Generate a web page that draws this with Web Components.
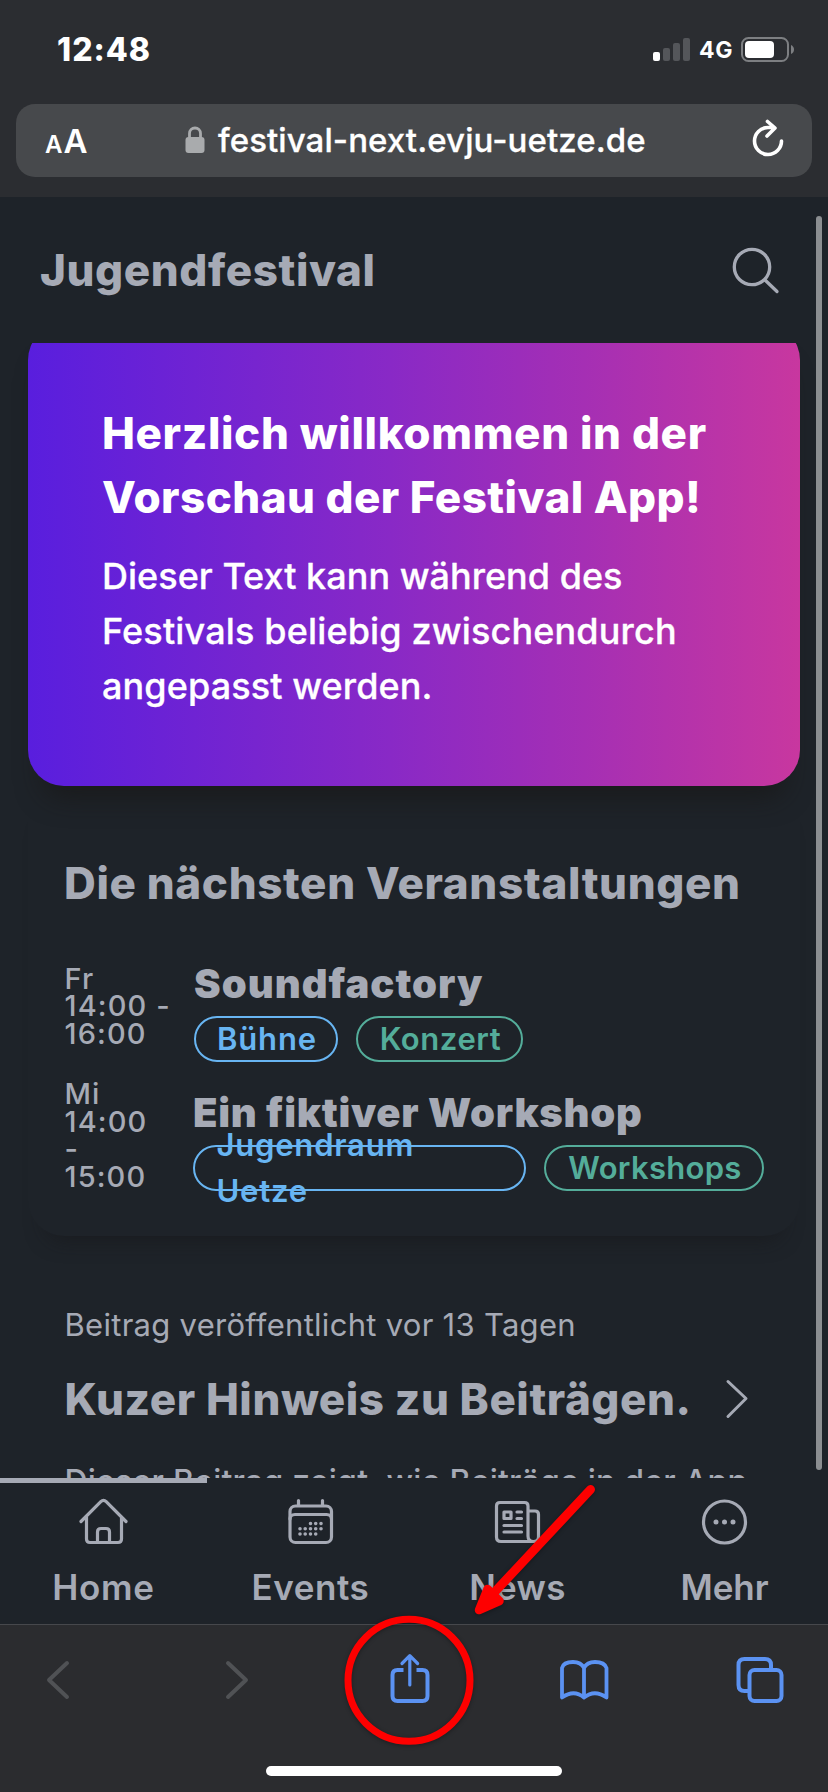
<!DOCTYPE html>
<html lang="de">
<head>
<meta charset="utf-8">
<title>Jugendfestival</title>
<style>
html,body{margin:0;padding:0;background:#1e2329}
body{font-family:Inter,"Liberation Sans",sans-serif;width:828px;height:1792px;overflow:hidden}
</style>
</head>
<body>
<phone-screen>
  <status-bar slot="chrome" time="12:48" network="4G"></status-bar>
  <address-bar slot="chrome">festival-next.evju-uetze.de</address-bar>
  <app-header slot="header">Jugendfestival</app-header>
  <welcome-card>
    <span slot="l1">Herzlich willkommen in der</span>
    <span slot="l2">Vorschau der Festival App!</span>
    <span slot="t1">Dieser Text kann während des</span>
    <span slot="t2">Festivals beliebig zwischendurch</span>
    <span slot="t3">angepasst werden.</span>
  </welcome-card>
  <event-list>
    <span slot="title">Die nächsten Veranstaltungen</span>
    <event-item style="--time-w:130px;--title-ls:1.01px">
      <span slot="time">Fr<br>14:00 -<br>16:00</span>
      <span slot="title">Soundfactory</span>
      <tag-pill style="width:144px;letter-spacing:.9px">Bühne</tag-pill>
      <tag-pill kind="topic" style="width:167px;letter-spacing:.6px">Konzert</tag-pill>
    </event-item>
    <event-item style="--time-w:129px;--title-ls:.7px">
      <span slot="time">Mi<br>14:00<br>-<br>15:00</span>
      <span slot="title">Ein fiktiver Workshop</span>
      <tag-pill multiline style="width:333px;letter-spacing:.8px">Jugendraum<br>Uetze</tag-pill>
      <tag-pill kind="topic" style="width:220px;letter-spacing:.3px">Workshops</tag-pill>
    </event-item>
  </event-list>
  <post-card>
    <span slot="meta">Beitrag veröffentlicht vor 13 Tagen</span>
    <span slot="title">Kuzer Hinweis zu Beiträgen.</span>
    Dieser Beitrag zeigt, wie Beiträge in der App
  </post-card>
  <tab-bar slot="tabs">
    <tab-item icon="home" style="letter-spacing:.69px">Home</tab-item>
    <tab-item icon="events" style="letter-spacing:.55px">Events</tab-item>
    <tab-item icon="news" style="letter-spacing:.29px">News</tab-item>
    <tab-item icon="more" style="letter-spacing:-.1px">Mehr</tab-item>
  </tab-bar>
  <browser-toolbar slot="toolbar"></browser-toolbar>
  <hint-overlay slot="overlay"></hint-overlay>
</phone-screen>
<script>
const define = (name, render) => customElements.define(name, class extends HTMLElement {
  constructor() {
    super();
    this.attachShadow({mode: 'open'});
  }
  connectedCallback() {
    this.shadowRoot.innerHTML = render(this);
  }
});

define('phone-screen', () => `
<style>
:host{display:grid;grid-template-rows:197px 146px 1135px 147px 167px;width:828px;height:1792px;position:relative;overflow:hidden;background:#1e2329;color:#a6aab5}
.chrome{background:#2b2d31}
main{overflow:hidden;min-height:0}
.scroll{position:absolute;left:816px;top:216px;width:6px;height:1254px;border-radius:3px;background:#8b8e91}
</style>
<div class="chrome"><slot name="chrome"></slot></div>
<slot name="header"></slot>
<main><slot></slot></main>
<slot name="tabs"></slot>
<slot name="toolbar"></slot>
<div class="scroll"></div>
<slot name="overlay"></slot>`);

define('status-bar', el => `
<style>
:host{display:flex;justify-content:space-between;height:104px;box-sizing:border-box;padding:0 33px 0 57px;color:#fff}
.time{font-weight:800;font-size:32px;line-height:99px;letter-spacing:1px}
.right{display:flex;align-items:flex-start}
.net{font-weight:700;font-size:23px;line-height:101px;letter-spacing:.6px;width:42px;margin-left:8px}
svg{display:block;margin-top:36px}
</style>
<span class="time">${el.getAttribute('time')}</span>
<div class="right">
<svg width="38" height="27" viewBox="653 36 38 27"><g fill="#54565a"><rect x="663" y="48" width="7" height="13" rx="2"/><rect x="673" y="43" width="7" height="18" rx="2"/><rect x="683" y="38" width="7" height="23" rx="2"/></g><rect x="653" y="52" width="7" height="9" rx="2" fill="#fff"/></svg>
<span class="net">${el.getAttribute('network')}</span>
<svg width="54" height="27" viewBox="741 36 54 27"><rect x="742" y="38" width="46" height="23" rx="6.5" fill="none" stroke="#7d7f82" stroke-width="2"/><rect x="745" y="41" width="29" height="17" rx="4" fill="#fff"/><path d="M791 45q3 1.500 3 4.500t-3 4.500z" fill="#7d7f82"/></svg>
</div>`);

define('address-bar', () => `
<style>
:host{display:flex;margin:0 16px;height:73px;border-radius:19px;background:#47494c;color:#fff;align-items:flex-start}
.aa{width:140px;padding-left:29px;font-weight:600;line-height:75px;font-size:33px;white-space:nowrap}
.aa small{font-size:24px;letter-spacing:1px}
.url{width:534px;padding-left:13px;font-weight:500;font-size:33px;line-height:72px;letter-spacing:.08px;-webkit-text-stroke:.3px #fff}
svg{display:block}
.lock{margin-top:22px;flex:none}.re{margin-top:15px;flex:none}
</style>
<div class="aa"><small>A</small>A</div>
<svg class="lock" width="20" height="28" viewBox="185.500 126 20 28"><rect x="186" y="137" width="19" height="16" rx="3" fill="#a9abad"/><path d="M190 138v-4.500a5.500 5.500 0 0 1 11 0v4.500" fill="none" stroke="#a9abad" stroke-width="2.800"/></svg>
<div class="url"><slot></slot></div>
<svg class="re" width="34" height="40" viewBox="752 119 34 40" fill="none" stroke="#fff" stroke-width="3.600" stroke-linecap="round" stroke-linejoin="round"><path d="M781.500 141a13.500 13.500 0 1 1-13.500-13.500h6M767.500 121.500l7.500 6.500-8 8"/></svg>`);

define('app-header', () => `
<style>
:host{display:flex;justify-content:space-between;padding:0 47px 0 40px}
h1{margin:0;font-weight:800;font-size:44px;line-height:146px;letter-spacing:.58px}
svg{display:block;margin-top:48px}
</style>
<h1><slot></slot></h1>
<svg width="50" height="52" viewBox="730 245 50 52" fill="none" stroke="#a6aab5" stroke-width="3.300" stroke-linecap="round"><circle cx="751" cy="267" r="17.700"/><path d="M764 280l12 11.500"/></svg>`);

define('welcome-card', () => `
<style>
:host{display:block;box-sizing:border-box;width:772px;height:462px;margin:-19px 0 0 28px;padding:77px 0 0 74px;border-radius:36px;color:#fff;background:linear-gradient(90deg,#591ede,#8929c6 47%,#a52fb4 72%,#c8379f);box-shadow:0 26px 26px -14px rgba(24,22,20,.6);white-space:nowrap}
h2{margin:0 0 20px;font-weight:800;font-size:44px;line-height:64px}
.text{font-weight:500;font-size:36px;line-height:55px;-webkit-text-stroke:.3px #fff}
.l1{letter-spacing:.63px}.l2{letter-spacing:.43px}
.t1{letter-spacing:.02px}.t2{letter-spacing:.15px}.t3{letter-spacing:.1px}
</style>
<h2><div class="l1"><slot name="l1"></slot></div><div class="l2"><slot name="l2"></slot></div></h2>
<div class="text"><div class="t1"><slot name="t1"></slot></div><div class="t2"><slot name="t2"></slot></div><div class="t3"><slot name="t3"></slot></div></div>`);

define('event-list', () => `
<style>
:host{display:block;box-sizing:border-box;width:772px;height:450px;margin:0 0 0 28px;padding:65px 0 0 36px;border-radius:36px;box-shadow:0 22px 20px -18px rgba(22,22,24,.55)}
h2{margin:0 0 41px;font-weight:800;font-size:44px;line-height:64px;letter-spacing:.62px}
.items{display:flex;flex-direction:column;gap:21px}
</style>
<h2><slot name="title"></slot></h2>
<div class="items"><slot></slot></div>`);

define('event-item', () => `
<style>
:host{display:flex;align-items:center}
.time{width:calc(var(--time-w) - .5px);padding-left:.5px;flex:none;font-weight:500;font-size:29px;line-height:27.500px;letter-spacing:1.100px;position:relative;top:-3px}
h3{margin:0 0 5px;font-weight:900;font-size:40px;line-height:55px;letter-spacing:var(--title-ls)}
.tags{display:flex;gap:18px}
</style>
<div class="time"><slot name="time"></slot></div>
<div><h3><slot name="title"></slot></h3><div class="tags"><slot></slot></div></div>`);

define('tag-pill', () => `
<style>
:host{display:flex;align-items:center;justify-content:center;box-sizing:border-box;height:46px;padding-left:2px;border:2px solid #68b5f2;border-radius:23px;color:#68b5f2;font-weight:600;font-size:31px;line-height:46px;white-space:nowrap}
:host([kind=topic]){color:#54ad9a;border-color:#54ad9a}
:host([multiline]){justify-content:flex-start;padding-left:21.500px}
</style><div><slot></slot></div>`);

define('post-card', () => `
<style>
:host{display:block;padding:65px 0 0 64.500px;white-space:nowrap;font-weight:500;font-size:32px;line-height:50px;letter-spacing:.22px}
.meta{font-weight:400;font-size:31px;line-height:47px;letter-spacing:.28px}
.row{display:flex;margin:19px 0 26px;align-items:center}
h2{margin:0;width:659.500px;font-weight:800;font-size:44px;line-height:64px;letter-spacing:.55px}
</style>
<div class="meta"><slot name="meta"></slot></div>
<div class="row"><h2><slot name="title"></slot></h2><svg width="26" height="44" viewBox="724 1376 26 44" fill="none" stroke="#a6aab5" stroke-width="3" stroke-linecap="round" stroke-linejoin="round"><path d="M728 1380.500l18 17-18 18"/></svg></div>
<slot></slot>`);

define('tab-bar', () => `
<style>
:host{display:block;background:#1e2329;border-bottom:1px solid #46484c}
.bar{width:207px;height:5px;background:#a6aab5}
nav{display:grid;grid-template-columns:repeat(4,207px)}
</style>
<div class="bar"></div><nav><slot></slot></nav>`);

const tabIcons = {
  home: ['79 1497 49 49', '<path d="M81 1521.500l19.800-19.800q2.700-2.700 5.400 0L126 1521.500M86.500 1517v22q0 3.500 3.500 3.500h28q3.500 0 3.500-3.500v-22M97.500 1542v-10q0-3.500 3.500-3.500h5q3.500 0 3.500 3.500v10"/>'],
  events: ['286 1497 49 49', '<path d="M298.500 1500.500v5M322.500 1500.500v5M290 1519q0-4.500 5-4.500h31.500q5 0 5 4.500"/><rect x="290" y="1506" width="41.500" height="36.500" rx="5.500"/><path stroke-width="3.600" d="M310.500 1523.500h.01M315.700 1523.500h.01M321 1523.500h.01M300 1528.700h.01M305.200 1528.700h.01M310.500 1528.700h.01M315.700 1528.700h.01M321 1528.700h.01M300 1534h.01M305.200 1534h.01M310.500 1534h.01M315.700 1534h.01"/>'],
  news: ['493 1497 49 49', '<path d="M528 1511h7q3.500 0 3.500 3.500V1537q0 4.500-5 4.500-5.500 0-5.500-5.500V1506q0-3.500-3.500-3.500H500q-3.500 0-3.500 3.500v31q0 4.500 4.500 4.500h32.500M504 1512h7v6.500h-7zM517 1512h4.500M517 1518.500h4.500M504 1525.500h17.500M504 1532h17.500"/>'],
  more: ['700 1497 49 49', '<circle cx="724.500" cy="1522" r="21"/><path stroke-width="5" d="M716 1522h.01M724.500 1522h.01M733 1522h.01"/>']
};
define('tab-item', el => {
  const [box, shapes] = tabIcons[el.getAttribute('icon')];
  return `
<style>
:host{display:flex;flex-direction:column;align-items:center;padding-top:14px;font-weight:600;font-size:35px;line-height:44px}
svg{display:block;margin-bottom:19px}
</style>
<svg width="49" height="49" viewBox="${box}" fill="none" stroke="#a6aab5" stroke-width="3.200" stroke-linecap="round" stroke-linejoin="round">${shapes}</svg>
<span><slot></slot></span>`;
});

define('browser-toolbar', () => `
<style>
:host{display:block;background:#2b2c2f}
.icons{display:flex;padding:25px 0 0 28px;height:116px;box-sizing:border-box}
svg{display:block;fill:none;stroke:#5b92f2;stroke-width:4;stroke-linecap:round;stroke-linejoin:round}
.off{stroke:#505255}
.home{width:296px;height:10px;border-radius:5px;background:#fff;margin:25px auto 0}
</style>
<div class="icons">
<svg class="off" width="60" height="60" viewBox="28 1650 60 60"><path d="M67 1663l-18 17 18 17"/></svg>
<svg class="off" style="margin-left:119px" width="60" height="60" viewBox="207 1650 60 60"><path d="M228 1663l18 17-18 17"/></svg>
<svg style="margin-left:112.500px" width="60" height="60" viewBox="379.500 1650 60 60"><path stroke-linecap="butt" d="M403 1670h-6q-5 0-5 5v21q0 5 5 5h25q5 0 5-5v-21q0-5-5-5h-6"/><path stroke-width="3.200" d="M409.300 1656v29M401.500 1663.500l7.800-7.800 7.800 7.800"/></svg>
<svg style="margin-left:114.500px" width="60" height="60" viewBox="554 1650 60 60"><path stroke-width="3.800" d="M584 1697.500q-10-8.500-22 0V1668q1.500-6 11-6 8 0 11 6 3-6 11-6 9.500 0 11.500 6v29.500q-12-8.500-22.500 0V1668"/></svg>
<svg style="margin-left:115.500px" width="60" height="60" viewBox="729.500 1650 60 60"><rect x="749" y="1670" width="32" height="31" rx="5"/><path stroke-linecap="butt" d="M749 1691h-5q-6 0-6-6v-20q0-6 6-6h20.500q6 0 6 6v5"/></svg>
</div>
<div class="home"></div>`);

define('hint-overlay', () => `
<style>
:host{display:block;position:absolute;left:330px;top:1475px;filter:drop-shadow(0 1px 2px rgba(0,0,0,.35))}
svg{display:block}
</style>
<svg width="280" height="280" viewBox="330 1475 280 280" fill="none" stroke="#fe0000" stroke-linecap="round" stroke-linejoin="round"><circle cx="409" cy="1680.300" r="61" stroke-width="7"/><path stroke-width="9" d="M590.500 1489.500L490 1597"/><path stroke-width="8.500" fill="#fe0000" d="M487.500 1589l-8.500 21 20.500-9z"/></svg>`);
</script>
</body>
</html>
